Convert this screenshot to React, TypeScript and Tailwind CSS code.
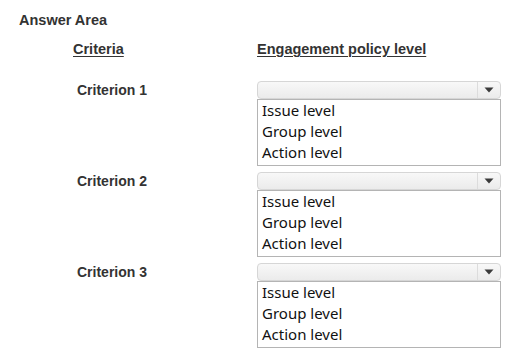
import React from "react";

const options = ["Issue level", "Group level", "Action level"];

function Dropdown() {
  return (
    <div className="flex flex-col w-[244px]">
      <div className="h-[18px] flex rounded-[4px] border border-[#d6d6d6] bg-gradient-to-b from-[#f8f8f8] to-[#ebebeb]">
        <div className="flex-1" />
        <div className="w-[23px] border-l border-[#dcdcdc] flex items-center justify-center">
          <svg width="10" height="6" viewBox="0 0 10 6">
            <polygon points="0.5,0.5 9.5,0.5 5,5.5" fill="#3a3a3a" />
          </svg>
        </div>
      </div>
      <div className="h-[67px] border border-[#b4b4b4] bg-white pl-[4px] pb-[2px] text-[15px] leading-[21px] text-[#111] [font-family:'Noto_Sans',sans-serif]">
        {options.map((o) => (
          <div key={o}>{o}</div>
        ))}
      </div>
    </div>
  );
}

export default function App() {
  const rows = ["Criterion 1", "Criterion 2", "Criterion 3"];
  return (
    <div className="w-[524px] h-[363px] bg-white overflow-hidden [font-family:'Liberation_Sans',Arial,sans-serif] text-[#333]">
      <div className="pt-[12px] pl-[19px] text-[14.5px] leading-[17px] font-bold">Answer Area</div>
      <div className="mt-[12px] flex text-[14.5px] leading-[17px] font-bold">
        <div className="w-[257px] pl-[73px]">
          <span className="underline underline-offset-[2px]">Criteria</span>
        </div>
        <div>
          <span className="underline underline-offset-[2px]">Engagement policy level</span>
        </div>
      </div>
      <div className="mt-[23px] flex flex-col gap-[6px]">
        {rows.map((r) => (
          <div key={r} className="flex">
            <div className="w-[257px] pl-[77px] h-[19px] flex items-center text-[14px] font-bold">{r}</div>
            <Dropdown />
          </div>
        ))}
      </div>
    </div>
  );
}
